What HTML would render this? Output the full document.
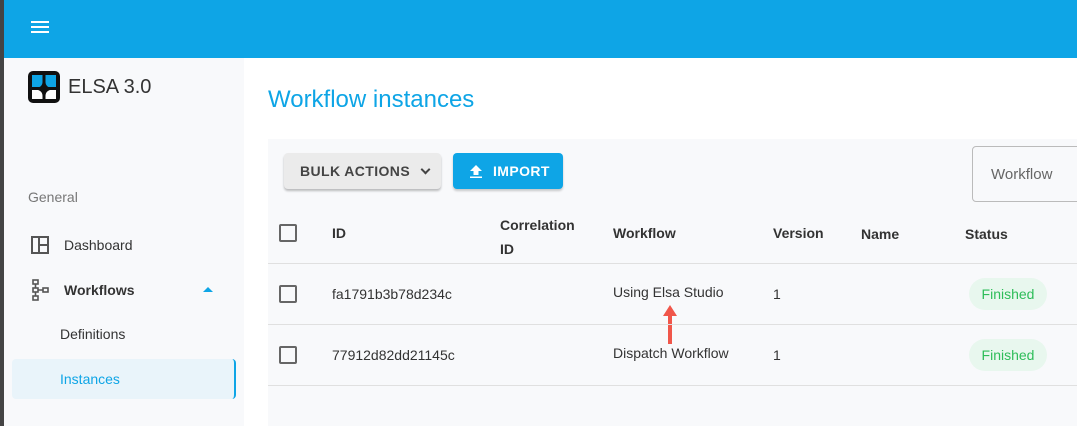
<!DOCTYPE html>
<html><head><style>
*{margin:0;padding:0;box-sizing:border-box}
body{width:1077px;height:426px;overflow:hidden;font-family:"Liberation Sans",sans-serif;background:#fff;position:relative}
.a{position:absolute}
.t{color:#333;font-size:14px;white-space:nowrap}
.cb{position:absolute;width:18px;height:18px;border:2px solid #666;border-radius:2px}
.line{position:absolute;left:268px;right:0;height:1px;background:#e0e0e0}
.pill{position:absolute;left:969px;width:78px;height:32px;border-radius:16px;background:#e8f7ee;color:#2ebd59;font-size:14px;text-align:center;line-height:32px}
</style></head><body>
<div class="a" style="left:0;top:0;width:4px;height:426px;background:#444"></div>
<div class="a" style="left:4px;top:0;right:0;height:58px;background:#0ea5e6"></div>
<div class="a" style="left:31px;top:21px;width:18px;height:2px;background:#fff;box-shadow:0 5px 0 #fff,0 10px 0 #fff"></div>
<div class="a" style="left:4px;top:58px;width:240px;height:368px;background:#f8f9fb"></div>
<svg class="a" style="left:28px;top:71px" width="32" height="32" viewBox="0 0 32 32"><rect x="0" y="0" width="32" height="32" rx="5" fill="#111"/><path d="M4 4h10.5v7c0 2-1 4-3 5H4z M17.5 4H28v12h-7.5c-2-1-3-3-3-5z" fill="#0ea5e6"/><path d="M4 19h6c3 1 4.5 3 4.5 6v3H4z M28 19h-6c-3 1-4.5 3-4.5 6v3H28z" fill="#fff"/></svg>
<div class="a" style="left:68px;top:76px;font-size:20px;color:#333">ELSA 3.0</div>
<div class="a t" style="left:28px;top:189px;color:#777">General</div>
<svg class="a" style="left:31px;top:236px" width="18" height="18" viewBox="0 0 18 18"><rect x="1" y="1" width="16" height="16" fill="none" stroke="#555" stroke-width="2"/><path d="M8 1v16M8 9h9" stroke="#555" stroke-width="2"/></svg>
<div class="a t" style="left:64px;top:237px">Dashboard</div>
<svg class="a" style="left:31px;top:279px" width="20" height="22" viewBox="0 0 20 22"><g fill="none" stroke="#555" stroke-width="1.6"><rect x="2" y="1" width="5" height="4"/><rect x="2" y="9" width="5" height="4"/><rect x="2" y="17" width="5" height="4"/><rect x="12" y="9" width="5" height="4"/><path d="M4.5 5v4M4.5 13v4M7 11h5"/></g></svg>
<div class="a t" style="left:64px;top:282px;font-weight:bold">Workflows</div>
<div class="a" style="left:203px;top:287px;border:5px solid transparent;border-bottom:5px solid #0ea5e6;border-top:0"></div>
<div class="a t" style="left:60px;top:326px">Definitions</div>
<div class="a" style="left:12px;top:359px;width:224px;height:40px;background:#e9f4fa;border-radius:4px;border-right:2px solid #0ea5e6"></div>
<div class="a t" style="left:60px;top:371px;color:#0ea5e6">Instances</div>
<div class="a" style="left:268px;top:86px;font-size:24px;color:#0ea5e6">Workflow instances</div>
<div class="a" style="left:268px;top:139px;right:0;height:287px;background:#f8f9fb"></div>
<div class="a" style="left:284px;top:153px;width:157px;height:36px;background:#ebebeb;border-radius:4px;box-shadow:0 2px 2px rgba(0,0,0,.25);font-size:14px;font-weight:bold;color:#444;line-height:36px;padding-left:16px;letter-spacing:.4px">BULK ACTIONS <span style="display:inline-block;margin-left:8px;width:7px;height:7px;border-right:2px solid #444;border-bottom:2px solid #444;transform:rotate(45deg);position:relative;top:-3px"></span></div>
<div class="a" style="left:453px;top:153px;width:110px;height:36px;background:#0ea5e6;border-radius:4px;box-shadow:0 2px 2px rgba(0,0,0,.2);font-size:14px;font-weight:bold;color:#fff;line-height:36px;padding-left:40px;letter-spacing:.4px">IMPORT</div>
<svg class="a" style="left:469px;top:164px" width="14" height="14" viewBox="0 0 14 14"><path d="M7 1L1 7h3.5v4h5V7H13z M1 12.5h12V14H1z" fill="#fff"/></svg>
<div class="a" style="left:972px;top:146px;width:120px;height:56px;border:1px solid #bbb;border-radius:4px;background:#f8f9fb;color:#666;font-size:15px;line-height:56px;padding-left:18px">Workflow</div>
<div class="cb" style="left:279px;top:224px"></div>
<div class="a t" style="left:332px;top:225px;font-weight:bold">ID</div>
<div class="a t" style="left:500px;top:213px;font-weight:bold;line-height:24px">Correlation<br>ID</div>
<div class="a t" style="left:613px;top:225px;font-weight:bold">Workflow</div>
<div class="a t" style="left:773px;top:225px;font-weight:bold">Version</div>
<div class="a t" style="left:861px;top:226px;font-weight:bold">Name</div>
<div class="a t" style="left:965px;top:226px;font-weight:bold">Status</div>
<div class="line" style="top:263px"></div>
<div class="cb" style="left:279px;top:285px"></div>
<div class="a t" style="left:332px;top:286px">fa1791b3b78d234c</div>
<div class="a t" style="left:613px;top:284px">Using Elsa Studio</div>
<div class="a t" style="left:773px;top:286px">1</div>
<div class="pill" style="top:278px">Finished</div>
<svg class="a" style="left:662px;top:304px" width="16" height="42" viewBox="0 0 16 42"><path d="M8 1L1 12h5v28h4V12h5z" fill="#f0564a"/></svg>
<div class="line" style="top:324px"></div>
<div class="cb" style="left:279px;top:346px"></div>
<div class="a t" style="left:332px;top:347px">77912d82dd21145c</div>
<div class="a t" style="left:613px;top:345px">Dispatch Workflow</div>
<div class="a t" style="left:773px;top:347px">1</div>
<div class="pill" style="top:339px">Finished</div>
<div class="line" style="top:385px"></div>
</body></html>
